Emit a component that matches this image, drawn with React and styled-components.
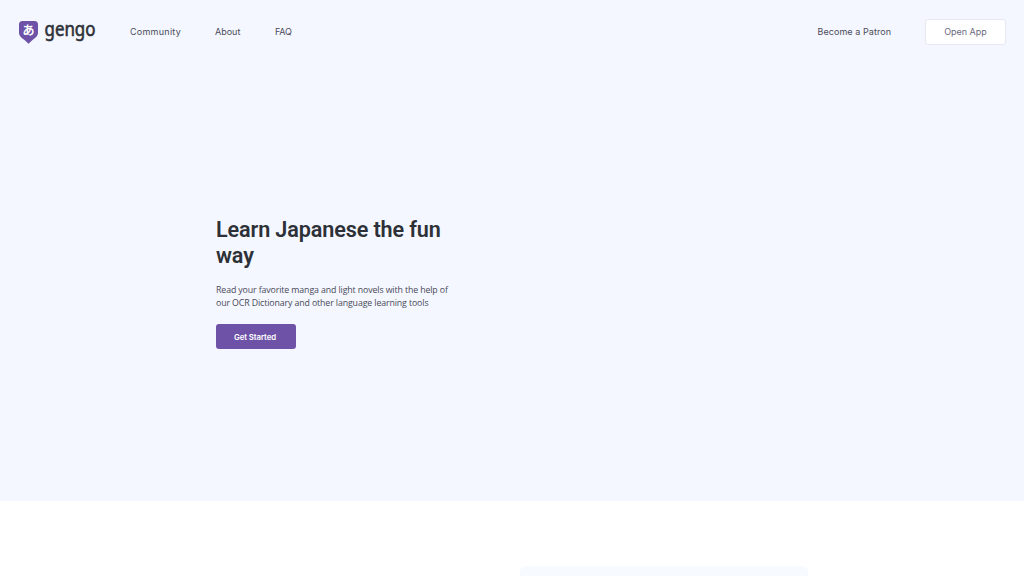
import React from 'react';
import styled, { createGlobalStyle } from 'styled-components';

const GlobalStyle = createGlobalStyle`
  * { box-sizing: border-box; }
  body {
    margin: 0;
    background: #fff;
    overflow: hidden;
    font-family: 'Open Sans', sans-serif;
  }
`;

const Page = styled.div`
  height: 576px;
  display: flex;
  flex-direction: column;
  overflow: hidden;
`;

const Hero = styled.section`
  height: 501px;
  flex: none;
  display: flex;
  flex-direction: column;
  background: #f4f7ff;
`;

const Header = styled.header`
  height: 64px;
  flex: none;
  display: flex;
  align-items: center;
  justify-content: space-between;
  padding: 0 18px;
`;

const Group = styled.nav`
  display: flex;
  align-items: center;
  gap: 34px;
`;

const Brand = styled.a`
  display: flex;
  width: 78px;
  height: 28px;
`;

const NavLink = styled.a`
  width: ${(p) => p.$width}px;
  color: #4b4b59;
  font: 400 9px/14px Inter, sans-serif;
  letter-spacing: ${(p) => p.$spacing || 0}px;
  white-space: nowrap;
`;

const Button = styled.button`
  display: flex;
  align-items: center;
  justify-content: center;
  height: 25px;
  width: 80px;
  padding: 1px 2px 0 0;
  border: 0;
  border-radius: 3px;
  background: #6e52a8;
  color: #fff;
  font: 600 7.8px/12px Inter, sans-serif;
  letter-spacing: -0.08px;
  white-space: nowrap;
`;

const OutlineButton = styled(Button)`
  height: 26px;
  width: 81px;
  padding: 0;
  border: 1px solid #e6e8f3;
  background: #fff;
  color: #6a6a7c;
  font: 400 9px/14px Inter, sans-serif;
  letter-spacing: 0;
`;

const Intro = styled.div`
  width: 260px;
  margin: 153px 0 0 216px;
`;

const Title = styled.h1`
  margin: 0;
  color: #2d3137;
  font: 600 21.6px/26px Roboto, sans-serif;
  letter-spacing: -0.12px;
`;

const Description = styled.p`
  margin: 15px 0 14px;
  color: #4a4a57;
  font: 400 8.8px/13px 'Open Sans', sans-serif;
  letter-spacing: -0.12px;
  white-space: nowrap;
`;

const Features = styled.section`
  flex: 1;
  display: flex;
  justify-content: flex-end;
  padding: 65px 216px 0 0;
`;

const Preview = styled.div`
  width: 288px;
  height: 160px;
  flex: none;
  border-radius: 6px;
  background: #f7fbff;
`;

function Logo() {
  return (
    <svg width="78" height="28" viewBox="0 0 78 28" overflow="visible" role="img" aria-label="gengo">
      <path
        d="M4.500 3H16.500Q20 3 20 6.500V14.500C20 18.500 17 20 14.500 22L10.500 25.800L6.500 22C4 20 1 18.500 1 14.500V6.500Q1 3 4.500 3Z"
        fill="#6e52a8"
      />
      <text x="10.500" y="16.500" textAnchor="middle" fontFamily="'Noto Sans CJK JP', sans-serif" fontSize="12" fontWeight="700" fill="#fff">あ</text>
      <text x="26.500" y="18" textLength="51" lengthAdjust="spacingAndGlyphs" fontFamily="'Noto Sans', sans-serif" fontSize="19.500" fill="#2d3137" stroke="#2d3137" strokeWidth="0.600">gengo</text>
    </svg>
  );
}

export default function App() {
  return (
    <Page>
      <GlobalStyle />
      <Hero>
        <Header>
          <Group>
            <Brand><Logo /></Brand>
            <NavLink $width={51} $spacing={0.25}>Community</NavLink>
            <NavLink $width={26}>About</NavLink>
            <NavLink $width={18} $spacing={-0.2}>FAQ</NavLink>
          </Group>
          <Group>
            <NavLink $width={73.5} $spacing={0.06}>Become a Patron</NavLink>
            <OutlineButton>Open App</OutlineButton>
          </Group>
        </Header>
        <Intro>
          <Title>Learn Japanese the fun<br />way</Title>
          <Description>
            Read your favorite manga and light novels with the help of<br />
            our OCR Dictionary and other language learning tools
          </Description>
          <Button>Get Started</Button>
        </Intro>
      </Hero>
      <Features>
        <Preview />
      </Features>
    </Page>
  );
}
